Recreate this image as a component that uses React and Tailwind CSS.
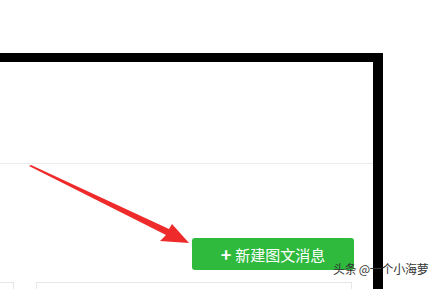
import React from "react";

function Arrow() {
  return (
    <svg
      className="absolute left-0 top-0 pointer-events-none"
      width="431"
      height="289"
      viewBox="0 0 431 289"
    >
      <polygon
        points="29,166 31,165 169,229 172,224 189,243 160,241 166,235"
        fill="#ee2a2a"
      />
    </svg>
  );
}

export default function App() {
  return (
    <div
      className="relative w-[431px] h-[289px] overflow-hidden bg-white"
      style={{ fontFamily: '"Noto Sans CJK SC", "Noto Sans", sans-serif' }}
    >
      <div className="mt-[53px] w-[383px] h-[236px] border-t-[9px] border-r-[10px] border-black flex flex-col">
        <div className="h-[102px] border-b border-[#ececec] shrink-0" />
        <div className="flex justify-end pr-[19px] pt-[74px] shrink-0">
          <button className="w-[162px] h-[32px] rounded-[3px] bg-[#2fba3e] text-white flex items-center justify-center gap-1 text-[15px] leading-none">
            <span className="text-[18px] font-bold leading-none -mt-[1px]">+</span>
            <span>新建图文消息</span>
          </button>
        </div>
        <div className="flex mt-[12px] gap-[22px] flex-1">
          <div className="w-[14px] border-t border-r border-[#e6e6e6]" />
          <div className="w-[316px] border-t border-l border-r border-[#e6e6e6]" />
        </div>
      </div>
      <Arrow />
      <div className="absolute left-[333px] top-[263px] text-[12px] leading-none text-[#333] tracking-tight">
        头条 @一个小海萝
      </div>
    </div>
  );
}
